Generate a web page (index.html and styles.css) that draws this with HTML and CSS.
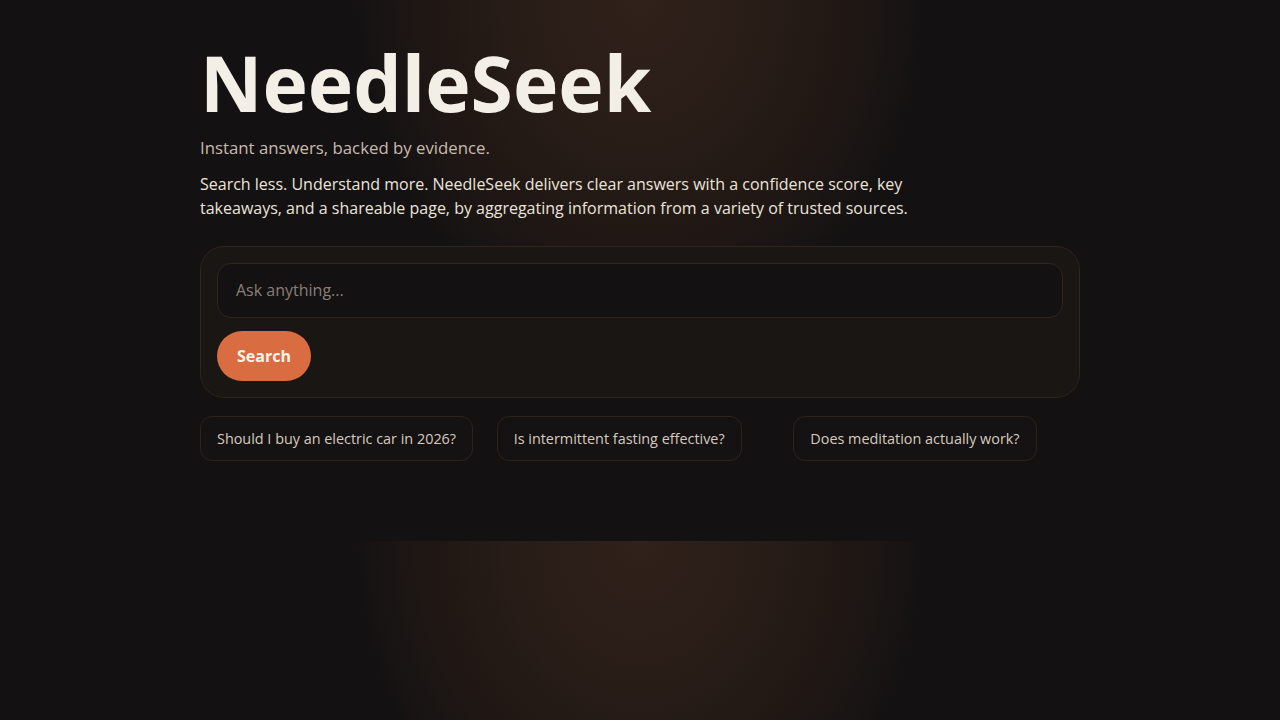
FILE: index.html
```html
<!DOCTYPE html>
<html lang="en">
<head>
<meta charset="UTF-8">
<meta name="viewport" content="width=device-width, initial-scale=1.0">
<title>NeedleSeek</title>
<link rel="stylesheet" href="styles.css">
</head>
<body>
<main class="page">
    <header class="hero">
        <h1 class="brand">NeedleSeek</h1>
        <p class="tagline">Instant answers, backed by evidence.</p>
        <p class="intro">Search less. Understand more. NeedleSeek delivers clear answers with a confidence score, key takeaways, and a shareable page, by aggregating information from a variety of trusted sources.</p>
    </header>

    <form class="search-card" onsubmit="return false">
        <input class="search-input" type="text" placeholder="Ask anything...">
        <div>
            <button class="search-btn" type="submit">Search</button>
        </div>
    </form>

    <div class="suggestions">
        <button class="chip" type="button">Should I buy an electric car in 2026?</button>
        <button class="chip" type="button">Is intermittent fasting effective?</button>
        <button class="chip" type="button">Does meditation actually work?</button>
    </div>
</main>
</body>
</html>
```

FILE: styles.css
```css
body {
    margin: 0;
    font-family: "Open Sans", "Noto Sans", sans-serif;
    color: #ece4da;
    background:
        radial-gradient(ellipse 285px 340px at 50% 0%, #30211a 0%, #291d17 40%, #1f1714 75%, #181413 92%, rgba(19, 17, 18, 0) 100%),
        #131112;
}

.page {
    width: 880px;
    margin: 0 auto;
    padding: 45px 0 80px;
}

/* Heading block */
.brand {
    margin: 0;
    font-size: 4.8rem;
    font-weight: 700;
    line-height: 1;
    color: #f3eee6;
}

.tagline {
    margin: 14px 0 0;
    font-size: 1.05rem;
    color: #c9bbad;
}

.intro {
    margin: 13px 0 0;
    max-width: 720px;
    font-size: 16px;
    line-height: 24px;
    color: #ece4da;
}

/* Search box */
.search-card {
    margin-top: 26px;
    padding: 16px;
    display: flex;
    flex-direction: column;
    gap: 13px;
    background: #1a1614;
    border: 1px solid #30241d;
    border-radius: 24px;
}

.search-input {
    height: 55px;
    box-sizing: border-box;
    padding: 0 18px;
    font-family: inherit;
    font-size: 16px;
    color: #ece4da;
    background: #131112;
    border: 1px solid #30241d;
    border-radius: 14px;
    outline: none;
}

.search-input::placeholder {
    color: #8a7f76;
}

.search-btn {
    height: 50px;
    padding: 0 20px;
    font-family: inherit;
    font-size: 16px;
    font-weight: 700;
    color: #fbf4ec;
    background: #d96c40;
    border: none;
    border-radius: 25px;
    cursor: pointer;
}

/* Example questions */
.suggestions {
    margin-top: 18px;
    display: grid;
    grid-template-columns: repeat(3, 1fr);
    gap: 10px;
}

.chip {
    justify-self: start;
    height: 45px;
    padding: 0 16px;
    font-family: inherit;
    font-size: 0.9rem;
    color: #d6cabe;
    background: #141213;
    border: 1px solid #2e231c;
    border-radius: 12px;
    cursor: pointer;
}
```
